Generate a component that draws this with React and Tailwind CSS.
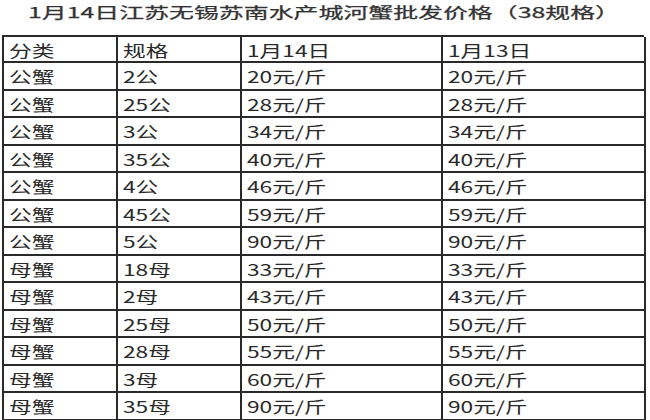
import React from "react";

const rows = [
  ["公蟹", "2公", "20元/斤", "20元/斤"],
  ["公蟹", "25公", "28元/斤", "28元/斤"],
  ["公蟹", "3公", "34元/斤", "34元/斤"],
  ["公蟹", "35公", "40元/斤", "40元/斤"],
  ["公蟹", "4公", "46元/斤", "46元/斤"],
  ["公蟹", "45公", "59元/斤", "59元/斤"],
  ["公蟹", "5公", "90元/斤", "90元/斤"],
  ["母蟹", "18母", "33元/斤", "33元/斤"],
  ["母蟹", "2母", "43元/斤", "43元/斤"],
  ["母蟹", "25母", "50元/斤", "50元/斤"],
  ["母蟹", "28母", "55元/斤", "55元/斤"],
  ["母蟹", "3母", "60元/斤", "60元/斤"],
  ["母蟹", "35母", "90元/斤", "90元/斤"],
];

const Cell = ({ text, h }) => (
  <div
    className={`flex items-center pl-[5px] pt-[1px] border-r-2 border-b-2 border-[#2a2a2a] overflow-hidden ${h}`}
  >
    <span className="inline-block origin-left scale-x-[1.42] text-[16px] leading-none text-[#2a2a2a] whitespace-nowrap">
      {text}
    </span>
  </div>
);

export default function App() {
  return (
    <div
      className="w-[650px] h-[420px] overflow-hidden bg-white"
      style={{ fontFamily: '"Noto Sans CJK SC", "Noto Sans", sans-serif' }}
    >
      {/* title */}
      <div className="flex items-start h-[35px] pl-[28px] pt-[3px]">
        <span className="inline-block origin-left scale-x-[1.66] text-[15px] leading-[18px] font-normal text-[#333333] [-webkit-text-stroke:0.25px_#333333] whitespace-nowrap">
          1月14日江苏无锡苏南水产城河蟹批发价格（38规格）
        </span>
      </div>

      {/* table */}
      <div className="ml-[2px] w-[642px] grid grid-cols-[114px_124px_201px_203px] border-l-2 border-t-2 border-[#2a2a2a]">
        <Cell text="分类" h="h-[26px]" />
        <Cell text="规格" h="h-[26px]" />
        <Cell text="1月14日" h="h-[26px]" />
        <Cell text="1月13日" h="h-[26px]" />
        {rows.map((r, i) =>
          r.map((c, j) => <Cell key={`${i}-${j}`} text={c} h="h-[27.5px]" />)
        )}
      </div>
    </div>
  );
}
